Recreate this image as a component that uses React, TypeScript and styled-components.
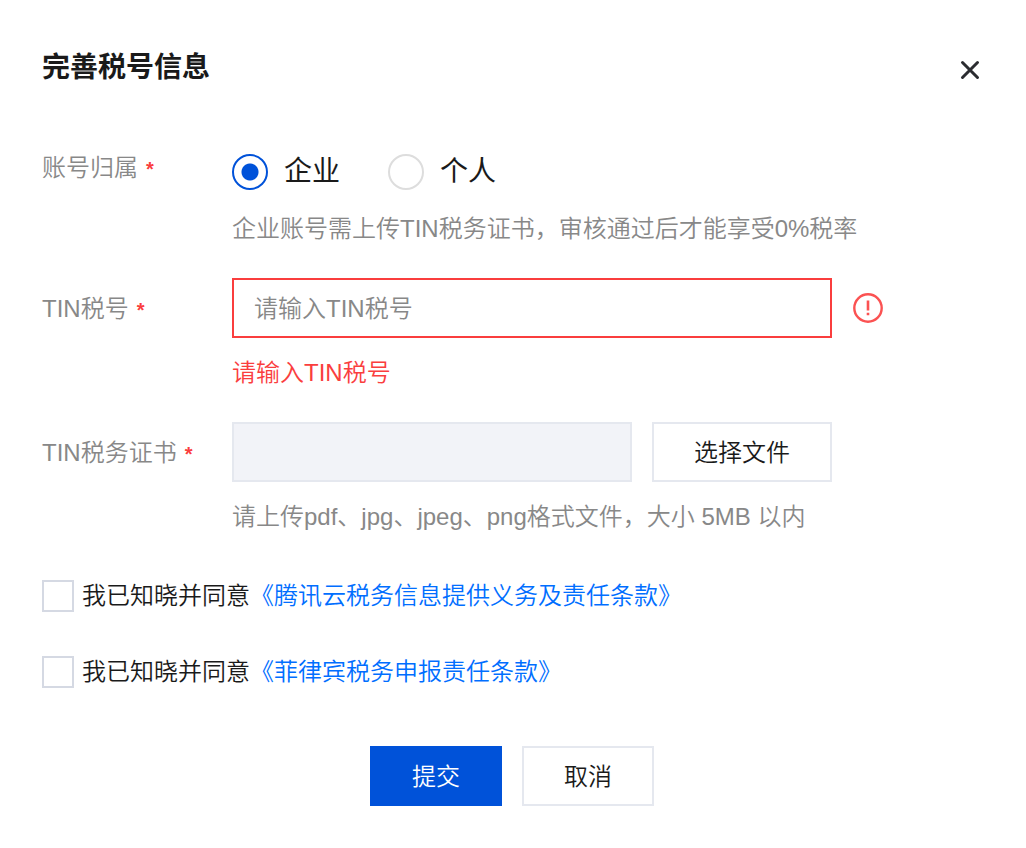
import React, { useState } from 'react';
import styled, { createGlobalStyle } from 'styled-components';

const GlobalStyle = createGlobalStyle`
  *, *::before, *::after {
    box-sizing: border-box;
  }
  body {
    margin: 0;
    background: #fff;
    color: #1a1a1a;
    font-family: "Liberation Sans", "Noto Sans CJK SC", sans-serif;
    font-size: 24px;
    font-weight: 350;
    line-height: 36px;
  }
  button, input {
    font: inherit;
    color: inherit;
  }
`;

const Dialog = styled.main`
  padding: 47px 44px 42px 42px;
`;

const Header = styled.header`
  display: flex;
  align-items: center;
  justify-content: space-between;
  margin-bottom: 60px;
`;

const Title = styled.h1`
  margin: 0;
  font-size: 28px;
  font-weight: 700;
  line-height: 42px;
`;

const CloseButton = styled.button`
  display: flex;
  padding: 4px 0 0;
  border: 0;
  background: none;
  cursor: pointer;
`;

const Form = styled.form`
  display: flex;
  flex-direction: column;
`;

const Field = styled.div`
  display: grid;
  grid-template-columns: 190px minmax(0, 1fr);
  align-items: start;
  margin-bottom: 31px;
`;

const Label = styled.label<{ $height: number }>`
  color: #888;
  line-height: ${(p) => p.$height}px;
`;

const Required = styled.span`
  margin-left: 8px;
  color: #fa3e3e;
  font-size: 20px;
  font-weight: 700;
  line-height: 1;
`;

const RadioGroup = styled.div`
  display: flex;
  align-items: flex-start;
  gap: 48px;
  height: 45px;
  padding-top: 5px;
`;

const RadioLabel = styled.label`
  display: flex;
  align-items: center;
  gap: 16px;
  font-size: 28px;
  font-weight: 400;
`;

const Radio = styled.input`
  appearance: none;
  width: 36px;
  height: 36px;
  margin: 0;
  border: 2px solid #ddd;
  border-radius: 50%;
  background: #fff;

  &:checked {
    border-color: #0052d9;
    background: radial-gradient(circle, #0052d9 8px, #fff 9px);
  }
`;

const Help = styled.p<{ $error?: boolean }>`
  margin: 17px 0 0;
  color: ${(p) => (p.$error ? '#fa3e3e' : '#888')};
`;

const ControlRow = styled.div`
  display: flex;
  align-items: center;
  gap: 20px;
`;

const TextInput = styled.input`
  flex: 0 1 600px;
  min-width: 0;
  height: 60px;
  padding: 2px 20px 0;
  border: 2px solid #fa3e3e;
  background: #fff;
  outline: 0;

  &::placeholder {
    color: #888;
    opacity: 1;
  }
`;

const FileName = styled.input`
  flex: 0 1 400px;
  min-width: 0;
  height: 60px;
  padding: 2px 20px 0;
  border: 2px solid #e5e8ef;
  background: #f2f3f8;
`;

const Button = styled.button<{ $primary?: boolean }>`
  height: 60px;
  padding: 2px 40px 0;
  border: 2px solid ${(p) => (p.$primary ? '#0052d9' : '#e5e8ef')};
  background: ${(p) => (p.$primary ? '#0052d9' : '#fff')};
  color: ${(p) => (p.$primary ? '#fff' : '#1a1a1a')};
  white-space: nowrap;
  cursor: pointer;
`;

const Agreements = styled.div`
  display: flex;
  flex-direction: column;
  gap: 40px;
  margin-top: 12px;
`;

const Agreement = styled.div`
  display: flex;
  align-items: center;
  gap: 8px;
`;

const Checkbox = styled.input`
  appearance: none;
  flex: none;
  width: 32px;
  height: 32px;
  margin: 0;
  border: 2px solid #d5d9e3;
  background: #fff;

  &:checked {
    border-color: #0052d9;
    background: #0052d9;
  }
`;

const Link = styled.a`
  color: #006eff;
  text-decoration: none;
`;

const Actions = styled.div`
  display: flex;
  justify-content: center;
  gap: 20px;
  margin-top: 56px;
`;

const CloseIcon = () => (
  <svg width="24" height="24" viewBox="0 0 24 24" fill="none" stroke="#2b2c30" strokeWidth="3" strokeLinecap="round" aria-hidden="true">
    <path d="M4.5 4.5 19.5 19.5M19.5 4.5 4.5 19.5" />
  </svg>
);

const ErrorIcon = () => (
  <svg width="32" height="32" viewBox="0 0 32 32" fill="none" stroke="#fb5252" role="img" aria-label="错误">
    <circle cx="16" cy="16" r="13.7" strokeWidth="2.4" />
    <path d="M16 8.6v10M16 20.8v2.4" strokeWidth="2.6" />
  </svg>
);

const agreements = [
  { id: 'tencent', title: '《腾讯云税务信息提供义务及责任条款》' },
  { id: 'philippines', title: '《菲律宾税务申报责任条款》' },
];

export default function App() {
  const [owner, setOwner] = useState('company');
  return (
    <>
      <GlobalStyle />
      <Dialog>
        <Header>
          <Title>完善税号信息</Title>
          <CloseButton type="button" aria-label="关闭">
            <CloseIcon />
          </CloseButton>
        </Header>
        <Form onSubmit={(e) => e.preventDefault()}>
          <Field role="radiogroup" aria-labelledby="owner-label">
            <Label as="span" id="owner-label" $height={38}>
              账号归属<Required>*</Required>
            </Label>
            <div>
              <RadioGroup>
                <RadioLabel>
                  <Radio type="radio" name="owner" checked={owner === 'company'} onChange={() => setOwner('company')} />
                  企业
                </RadioLabel>
                <RadioLabel>
                  <Radio type="radio" name="owner" checked={owner === 'person'} onChange={() => setOwner('person')} />
                  个人
                </RadioLabel>
              </RadioGroup>
              <Help>企业账号需上传TIN税务证书，审核通过后才能享受0%税率</Help>
            </div>
          </Field>
          <Field>
            <Label htmlFor="tin" $height={62}>
              TIN税号<Required>*</Required>
            </Label>
            <div>
              <ControlRow>
                <TextInput id="tin" placeholder="请输入TIN税号" aria-invalid="true" aria-describedby="tin-error" />
                <ErrorIcon />
              </ControlRow>
              <Help id="tin-error" $error>请输入TIN税号</Help>
            </div>
          </Field>
          <Field>
            <Label htmlFor="certificate" $height={62}>
              TIN税务证书<Required>*</Required>
            </Label>
            <div>
              <ControlRow>
                <FileName id="certificate" disabled />
                <Button type="button">选择文件</Button>
              </ControlRow>
              <Help>请上传pdf、jpg、jpeg、png格式文件，大小 5MB 以内</Help>
            </div>
          </Field>
          <Agreements>
            {agreements.map(({ id, title }) => (
              <Agreement key={id}>
                <Checkbox type="checkbox" id={id} />
                <span>
                  <label htmlFor={id}>我已知晓并同意</label>
                  <Link href="#">{title}</Link>
                </span>
              </Agreement>
            ))}
          </Agreements>
          <Actions>
            <Button type="submit" $primary>提交</Button>
            <Button type="button">取消</Button>
          </Actions>
        </Form>
      </Dialog>
    </>
  );
}
